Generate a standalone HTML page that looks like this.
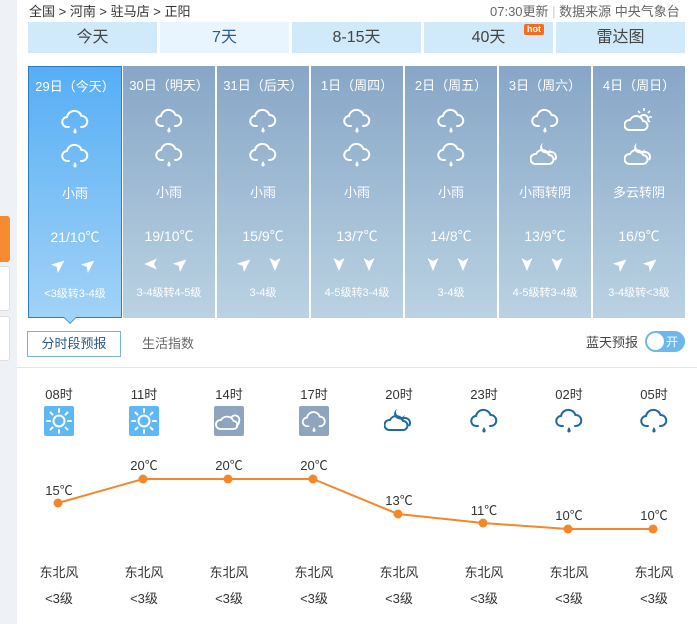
<!DOCTYPE html>
<html><head><meta charset="utf-8"><style>
*{margin:0;padding:0;box-sizing:border-box}
body{width:697px;height:624px;overflow:hidden;background:#fff;font-family:"Liberation Sans","Noto Sans CJK SC",sans-serif;position:relative;color:#333}
.a{position:absolute}
.tab{position:absolute;top:22px;height:31px;width:129px;background:#d0e9fb;color:#444;font-size:16px;line-height:31px;text-align:center}
.card{position:absolute;top:66px;height:252px;width:92px;background:linear-gradient(#87a6c7,#bad2e2);color:#fff;text-align:center}
.card div{position:absolute;left:0;width:100%}
.card svg{position:absolute}
.d{top:9px;font-size:13px}
.w{top:116px;font-size:13px}
.t{top:160px;font-size:14px}
.l{top:218px;font-size:11px}
.i1{top:40px}.i2{top:74px}.ar{top:190px}
.h{position:absolute;width:60px;text-align:center;font-size:13px;color:#333}
</style></head><body>
<svg width="0" height="0" style="position:absolute">
<defs>
<symbol id="rain" viewBox="0 0 30 28"><path d="M9 20 H7.5 a5 5 0 0 1 -0.5 -10 a7.5 7.5 0 0 1 14.5 -1 a5.2 5.2 0 0 1 0.5 11 H21" fill="none" stroke="currentColor" stroke-width="2" stroke-linecap="round"/><path d="M15 21 q-2 3 -1.6 4.4 a1.7 1.7 0 0 0 3.2 0 q0.4 -1.4 -1.6 -4.4z" fill="currentColor"/></symbol>
<symbol id="night" viewBox="0 0 30 28"><path d="M5 24 a5 5 0 0 1 1-10 a7 7 0 0 1 13 1 a4.5 4.5 0 0 1 0 9z" fill="none" stroke="currentColor" stroke-width="2"/><path d="M17 14 a4 4 0 0 1 8 6" fill="none" stroke="currentColor" stroke-width="2"/><path d="M13 3 a5.5 5.5 0 1 0 8 6 a4.5 4.5 0 0 1 -8 -6z" fill="currentColor"/></symbol>
<symbol id="pc" viewBox="0 0 30 28"><path d="M5 24 a5 5 0 0 1 1-10 a7 7 0 0 1 13 1 a4.5 4.5 0 0 1 0 9z" fill="none" stroke="currentColor" stroke-width="2"/><path d="M16 11 a4.5 4.5 0 0 1 8 4" fill="none" stroke="currentColor" stroke-width="2"/><g stroke="currentColor" stroke-width="1.6"><path d="M20 2v3M26 5l-2 2M28 11h-3M14 5l2 2M26 16l-2-1.5"/></g></symbol>
<symbol id="sun" viewBox="0 0 30 30"><circle cx="15" cy="15" r="5.5" fill="none" stroke="#fff" stroke-width="2"/><g stroke="#fff" stroke-width="2" stroke-linecap="round"><path d="M15 3v3M15 24v3M3 15h3M24 15h3M6.5 6.5l2 2M21.5 21.5l2 2M23.5 6.5l-2 2M8.5 21.5l-2 2"/></g></symbol>
<symbol id="cl" viewBox="0 0 30 30"><path d="M6 23 a4.5 4.5 0 0 1 1-9 a7 7 0 0 1 12.5 1 a4 4 0 0 1 0 8z" fill="none" stroke="#fff" stroke-width="1.8"/><path d="M17 12 a4 4 0 0 1 8 3.5 a3.5 3.5 0 0 1 -3 4" fill="none" stroke="#fff" stroke-width="1.8"/></symbol>
<symbol id="dart" viewBox="-8 -8 16 16"><path d="M0 -7 L5.5 6 L0 3 L-5.5 6z" fill="#fff"/></symbol>
</defs></svg>

<div class="a" style="left:0;top:0;width:17px;height:624px;background:#eef2f6"></div>
<div class="a" style="left:0;top:216px;width:10px;height:46px;background:#f68b32;border-radius:0 3px 3px 0"></div>
<div class="a" style="left:0;top:266px;width:10px;height:45px;background:#fff;border:1px solid #ddd;border-left:0;border-radius:0 3px 3px 0"></div>
<div class="a" style="left:0;top:316px;width:10px;height:45px;background:#fff;border:1px solid #ddd;border-left:0;border-radius:0 3px 3px 0"></div>

<div class="a" style="left:29px;top:1px;font-size:13px;color:#333">全国 &gt; 河南 &gt; 驻马店 &gt; 正阳</div>
<div class="a" style="left:490px;top:1px;font-size:13px;color:#666">07:30更新 <span style="color:#ccc">|</span> 数据来源 中央气象台</div>

<div class="tab" style="left:28px">今天</div>
<div class="tab" style="left:160px;background:#e9f5fe;color:#2a5a9a">7天</div>
<div class="tab" style="left:292px">8-15天</div>
<div class="tab" style="left:424px">40天</div>
<div class="tab" style="left:556px">雷达图</div>
<div class="a" style="left:524px;top:24px;width:20px;height:11px;background:#f76b1c;color:#fff;font-size:9px;line-height:11px;text-align:center;border-radius:2px;font-weight:bold">hot</div>

<div class="card" style="left:28px;width:94px;background:linear-gradient(#56aef6,#a2d2f6);border:1px solid #2a7fc4"><div class="d">29日（今天）</div><svg class="i1" style="left:31px;width:30px;height:28px;color:#fff"><use href="#rain"/></svg><svg class="i2" style="left:31px;width:30px;height:28px;color:#fff"><use href="#rain"/></svg><div class="w">小雨</div><div class="t">21/10℃</div><svg class="ar" style="left:22px;width:16px;height:16px"><use href="#dart" transform="rotate(50 8 8)"/></svg><svg class="ar" style="left:52px;width:16px;height:16px"><use href="#dart" transform="rotate(50 8 8)"/></svg><div class="l">&lt;3级转3-4级</div></div>
<div class="a" style="left:63px;top:317px;width:0;height:0;border-left:7px solid transparent;border-right:7px solid transparent;border-top:7px solid #2a7fc4"></div>
<div class="a" style="left:64px;top:317px;width:0;height:0;border-left:6px solid transparent;border-right:6px solid transparent;border-top:6px solid #a2d2f6"></div>

<div class="card" style="left:123px"><div class="d">30日（明天）</div><svg class="i1" style="left:31px;width:30px;height:28px;color:#fff"><use href="#rain"/></svg><svg class="i2" style="left:31px;width:30px;height:28px;color:#fff"><use href="#rain"/></svg><div class="w">小雨</div><div class="t">19/10℃</div><svg class="ar" style="left:20px;width:16px;height:16px"><use href="#dart" transform="rotate(-90 8 8)"/></svg><svg class="ar" style="left:50px;width:16px;height:16px"><use href="#dart" transform="rotate(50 8 8)"/></svg><div class="l">3-4级转4-5级</div></div>
<div class="card" style="left:217px"><div class="d">31日（后天）</div><svg class="i1" style="left:31px;width:30px;height:28px;color:#fff"><use href="#rain"/></svg><svg class="i2" style="left:31px;width:30px;height:28px;color:#fff"><use href="#rain"/></svg><div class="w">小雨</div><div class="t">15/9℃</div><svg class="ar" style="left:20px;width:16px;height:16px"><use href="#dart" transform="rotate(50 8 8)"/></svg><svg class="ar" style="left:50px;width:16px;height:16px"><use href="#dart" transform="rotate(180 8 8)"/></svg><div class="l">3-4级</div></div>
<div class="card" style="left:311px"><div class="d">1日（周四）</div><svg class="i1" style="left:31px;width:30px;height:28px;color:#fff"><use href="#rain"/></svg><svg class="i2" style="left:31px;width:30px;height:28px;color:#fff"><use href="#rain"/></svg><div class="w">小雨</div><div class="t">13/7℃</div><svg class="ar" style="left:20px;width:16px;height:16px"><use href="#dart" transform="rotate(180 8 8)"/></svg><svg class="ar" style="left:50px;width:16px;height:16px"><use href="#dart" transform="rotate(180 8 8)"/></svg><div class="l">4-5级转3-4级</div></div>
<div class="card" style="left:405px"><div class="d">2日（周五）</div><svg class="i1" style="left:31px;width:30px;height:28px;color:#fff"><use href="#rain"/></svg><svg class="i2" style="left:31px;width:30px;height:28px;color:#fff"><use href="#rain"/></svg><div class="w">小雨</div><div class="t">14/8℃</div><svg class="ar" style="left:20px;width:16px;height:16px"><use href="#dart" transform="rotate(180 8 8)"/></svg><svg class="ar" style="left:50px;width:16px;height:16px"><use href="#dart" transform="rotate(180 8 8)"/></svg><div class="l">3-4级</div></div>
<div class="card" style="left:499px"><div class="d">3日（周六）</div><svg class="i1" style="left:31px;width:30px;height:28px;color:#fff"><use href="#rain"/></svg><svg class="i2" style="left:31px;width:30px;height:28px;color:#fff"><use href="#night"/></svg><div class="w">小雨转阴</div><div class="t">13/9℃</div><svg class="ar" style="left:20px;width:16px;height:16px"><use href="#dart" transform="rotate(180 8 8)"/></svg><svg class="ar" style="left:50px;width:16px;height:16px"><use href="#dart" transform="rotate(180 8 8)"/></svg><div class="l">4-5级转3-4级</div></div>
<div class="card" style="left:593px"><div class="d">4日（周日）</div><svg class="i1" style="left:31px;width:30px;height:28px;color:#fff"><use href="#pc"/></svg><svg class="i2" style="left:31px;width:30px;height:28px;color:#fff"><use href="#night"/></svg><div class="w">多云转阴</div><div class="t">16/9℃</div><svg class="ar" style="left:20px;width:16px;height:16px"><use href="#dart" transform="rotate(50 8 8)"/></svg><svg class="ar" style="left:50px;width:16px;height:16px"><use href="#dart" transform="rotate(50 8 8)"/></svg><div class="l">3-4级转&lt;3级</div></div>

<div class="a" style="left:27px;top:331px;width:94px;height:26px;border:1px solid #7ab3da;color:#2a5a8a;font-size:13px;line-height:24px;text-align:center">分时段预报</div>
<div class="a" style="left:142px;top:331px;font-size:13px;line-height:26px;color:#666">生活指数</div>
<div class="a" style="left:586px;top:332px;font-size:13px;color:#444">蓝天预报</div>
<div class="a" style="left:645px;top:331px;width:40px;height:21px;border-radius:11px;background:#6cb8ea"><div class="a" style="left:2px;top:2px;width:17px;height:17px;border-radius:50%;background:#fff"></div><div class="a" style="left:21px;top:2px;color:#fff;font-size:12px">开</div></div>
<div class="a" style="left:17px;top:367px;width:680px;height:1px;background:#e6e6e6"></div>

<div class="h" style="left:29px;top:384px">08时</div>
<div class="h" style="left:114px;top:384px">11时</div>
<div class="h" style="left:199px;top:384px">14时</div>
<div class="h" style="left:284px;top:384px">17时</div>
<div class="h" style="left:369px;top:384px">20时</div>
<div class="h" style="left:454px;top:384px">23时</div>
<div class="h" style="left:539px;top:384px">02时</div>
<div class="h" style="left:624px;top:384px">05时</div>

<div class="a" style="left:44px;top:406px;width:30px;height:30px;background:#5fb8f6;border-radius:2px"><svg width="30" height="30"><use href="#sun"/></svg></div>
<div class="a" style="left:129px;top:406px;width:30px;height:30px;background:#5fb8f6;border-radius:2px"><svg width="30" height="30"><use href="#sun"/></svg></div>
<div class="a" style="left:214px;top:406px;width:30px;height:30px;background:#8fa5bf;border-radius:2px"><svg width="30" height="30"><use href="#cl"/></svg></div>
<div class="a" style="left:299px;top:406px;width:30px;height:30px;background:#8fa5bf;border-radius:2px"><svg width="30" height="30" viewBox="-2 -2 34 32" style="color:#fff"><use href="#rain" width="30" height="28"/></svg></div>
<svg class="a" style="left:384px;top:406px;color:#1e6aa3" width="30" height="28"><use href="#night"/></svg>
<svg class="a" style="left:469px;top:406px;color:#1e6aa3" width="30" height="28"><use href="#rain"/></svg>
<svg class="a" style="left:554px;top:406px;color:#1e6aa3" width="30" height="28"><use href="#rain"/></svg>
<svg class="a" style="left:639px;top:406px;color:#1e6aa3" width="30" height="28"><use href="#rain"/></svg>

<svg class="a" style="left:0;top:0" width="697" height="624">
<polyline points="58,503 143,479 228,479 313,479 398,514 483,523 568,529 653,529" fill="none" stroke="#f5862a" stroke-width="2"/>
<g fill="#f5862a"><circle cx="58" cy="503" r="4.5"/><circle cx="143" cy="479" r="4.5"/><circle cx="228" cy="479" r="4.5"/><circle cx="313" cy="479" r="4.5"/><circle cx="398" cy="514" r="4.5"/><circle cx="483" cy="523" r="4.5"/><circle cx="568" cy="529" r="4.5"/><circle cx="653" cy="529" r="4.5"/></g>
<g font-family="Liberation Sans, Noto Sans CJK SC, sans-serif" font-size="13" fill="#333" text-anchor="middle">
<text x="59" y="495">15℃</text><text x="144" y="470">20℃</text><text x="229" y="470">20℃</text><text x="314" y="470">20℃</text><text x="399" y="505">13℃</text><text x="484" y="515">11℃</text><text x="569" y="520">10℃</text><text x="654" y="520">10℃</text>
<text x="59" y="577">东北风</text><text x="144" y="577">东北风</text><text x="229" y="577">东北风</text><text x="314" y="577">东北风</text><text x="399" y="577">东北风</text><text x="484" y="577">东北风</text><text x="569" y="577">东北风</text><text x="654" y="577">东北风</text>
<text x="59" y="603">&lt;3级</text><text x="144" y="603">&lt;3级</text><text x="229" y="603">&lt;3级</text><text x="314" y="603">&lt;3级</text><text x="399" y="603">&lt;3级</text><text x="484" y="603">&lt;3级</text><text x="569" y="603">&lt;3级</text><text x="654" y="603">&lt;3级</text>
</g>
</svg>
</body></html>
